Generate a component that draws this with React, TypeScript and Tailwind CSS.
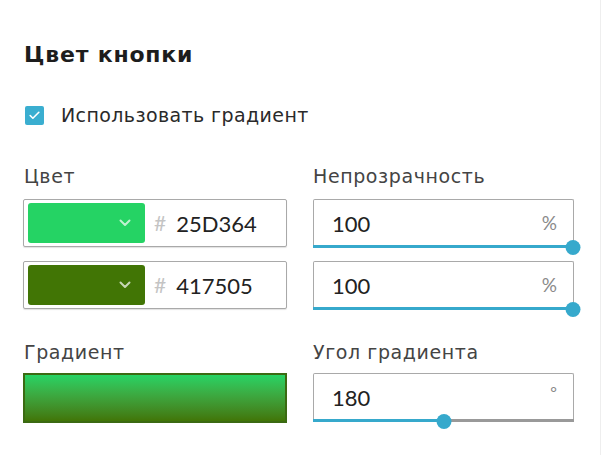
import { Check } from "lucide-react";

function Chevron() {
  return (
    <svg width="12" height="8" viewBox="0 0 12 8" className="text-white/70">
      <path d="M1.5 1.5 L6 6 L10.5 1.5" fill="none" stroke="currentColor" strokeWidth="2" strokeLinecap="round" strokeLinejoin="round" />
    </svg>
  );
}

function ColorField({ color, hex }: { color: string; hex: string }) {
  return (
    <div className="flex items-center h-[48px] border border-[#a9a9a9] rounded-[2px] bg-white pl-[4px] shadow-[0_1px_1px_rgba(0,0,0,0.12)]">
      <div className="w-[117px] h-[40px] rounded-[3px] flex items-center justify-end pr-[14px]" style={{ backgroundColor: color }}>
        <Chevron />
      </div>
      <span className="ml-[9px] text-[21px] text-[#c4c4c4]">#</span>
      <span className="ml-[10px] text-[22px] text-[#222]">{hex}</span>
    </div>
  );
}

function SliderField({ value, unit, pct }: { value: string; unit: string; pct: number }) {
  return (
    <div className="relative h-[48px] border border-b-0 border-[#a9a9a9] rounded-t-[2px] bg-white flex items-center justify-between pl-[18px] pr-[16px]">
      <span className="text-[22px] text-[#222]">{value}</span>
      <span className={unit === "°" ? "text-[16px] text-[#888] -mt-[12px]" : "text-[19px] text-[#8a8a8a]"}>{unit}</span>
      <div className="absolute left-[-1px] right-[-1px] bottom-[-1px] h-[3px] bg-[#999]">
        <div className="h-full bg-[#36a9cc]" style={{ width: `${pct}%` }} />
      </div>
      <div
        className="absolute bottom-[-8px] w-[15px] h-[15px] rounded-full bg-[#36a9cc] -translate-x-1/2"
        style={{ left: `${pct}%` }}
      />
    </div>
  );
}

export default function App() {
  return (
    <div className="w-[601px] h-[455px] bg-white border-r border-[#eee] pt-[41px] pl-[23px] font-['Lato','DejaVu_Sans',sans-serif] text-[#333]">
      <h2 className="font-['DejaVu_Sans',sans-serif] text-[22px] leading-[28px] font-semibold tracking-[0.8px] text-[#1d1d1d] pl-[1px]">Цвет кнопки</h2>

      <div className="mt-[36px] flex items-center h-[20px] pl-[2px]">
        <div className="w-[19px] h-[19px] rounded-[2px] bg-[#3aaed0] flex items-center justify-center">
          <Check size={13} strokeWidth={3} className="text-white" />
        </div>
        <span className="ml-[17px] font-['DejaVu_Sans',sans-serif] text-[19px] tracking-[0.4px] text-[#2a2a2a]">Использовать градиент</span>
      </div>

      <div className="mt-[40px] grid grid-cols-[264px_261px] gap-x-[26px] font-['DejaVu_Sans',sans-serif] tracking-[0.6px]">
        <div className="flex flex-col">
          <div className="text-[19px] leading-[22px] text-[#444] pl-[1px]">Цвет</div>
          <div className="mt-[12px] flex flex-col gap-[14px] font-['Lato',sans-serif] tracking-normal">
            <ColorField color="#25D364" hex="25D364" />
            <ColorField color="#417505" hex="417505" />
          </div>
          <div className="mt-[32px] text-[19px] leading-[22px] text-[#444] pl-[1px]">Градиент</div>
          <div className="mt-[10px] h-[50px] border-2 border-[#3b6a12] bg-gradient-to-b from-[#25D364] to-[#417505]" />
        </div>

        <div className="flex flex-col">
          <div className="text-[19px] leading-[22px] text-[#444]">Непрозрачность</div>
          <div className="mt-[12px] flex flex-col gap-[14px] font-['Lato',sans-serif] tracking-normal">
            <SliderField value="100" unit="%" pct={100} />
            <SliderField value="100" unit="%" pct={100} />
          </div>
          <div className="mt-[32px] text-[19px] leading-[22px] text-[#444]">Угол градиента</div>
          <div className="mt-[10px] font-['Lato',sans-serif] tracking-normal">
            <SliderField value="180" unit="°" pct={50} />
          </div>
        </div>
      </div>
    </div>
  );
}
